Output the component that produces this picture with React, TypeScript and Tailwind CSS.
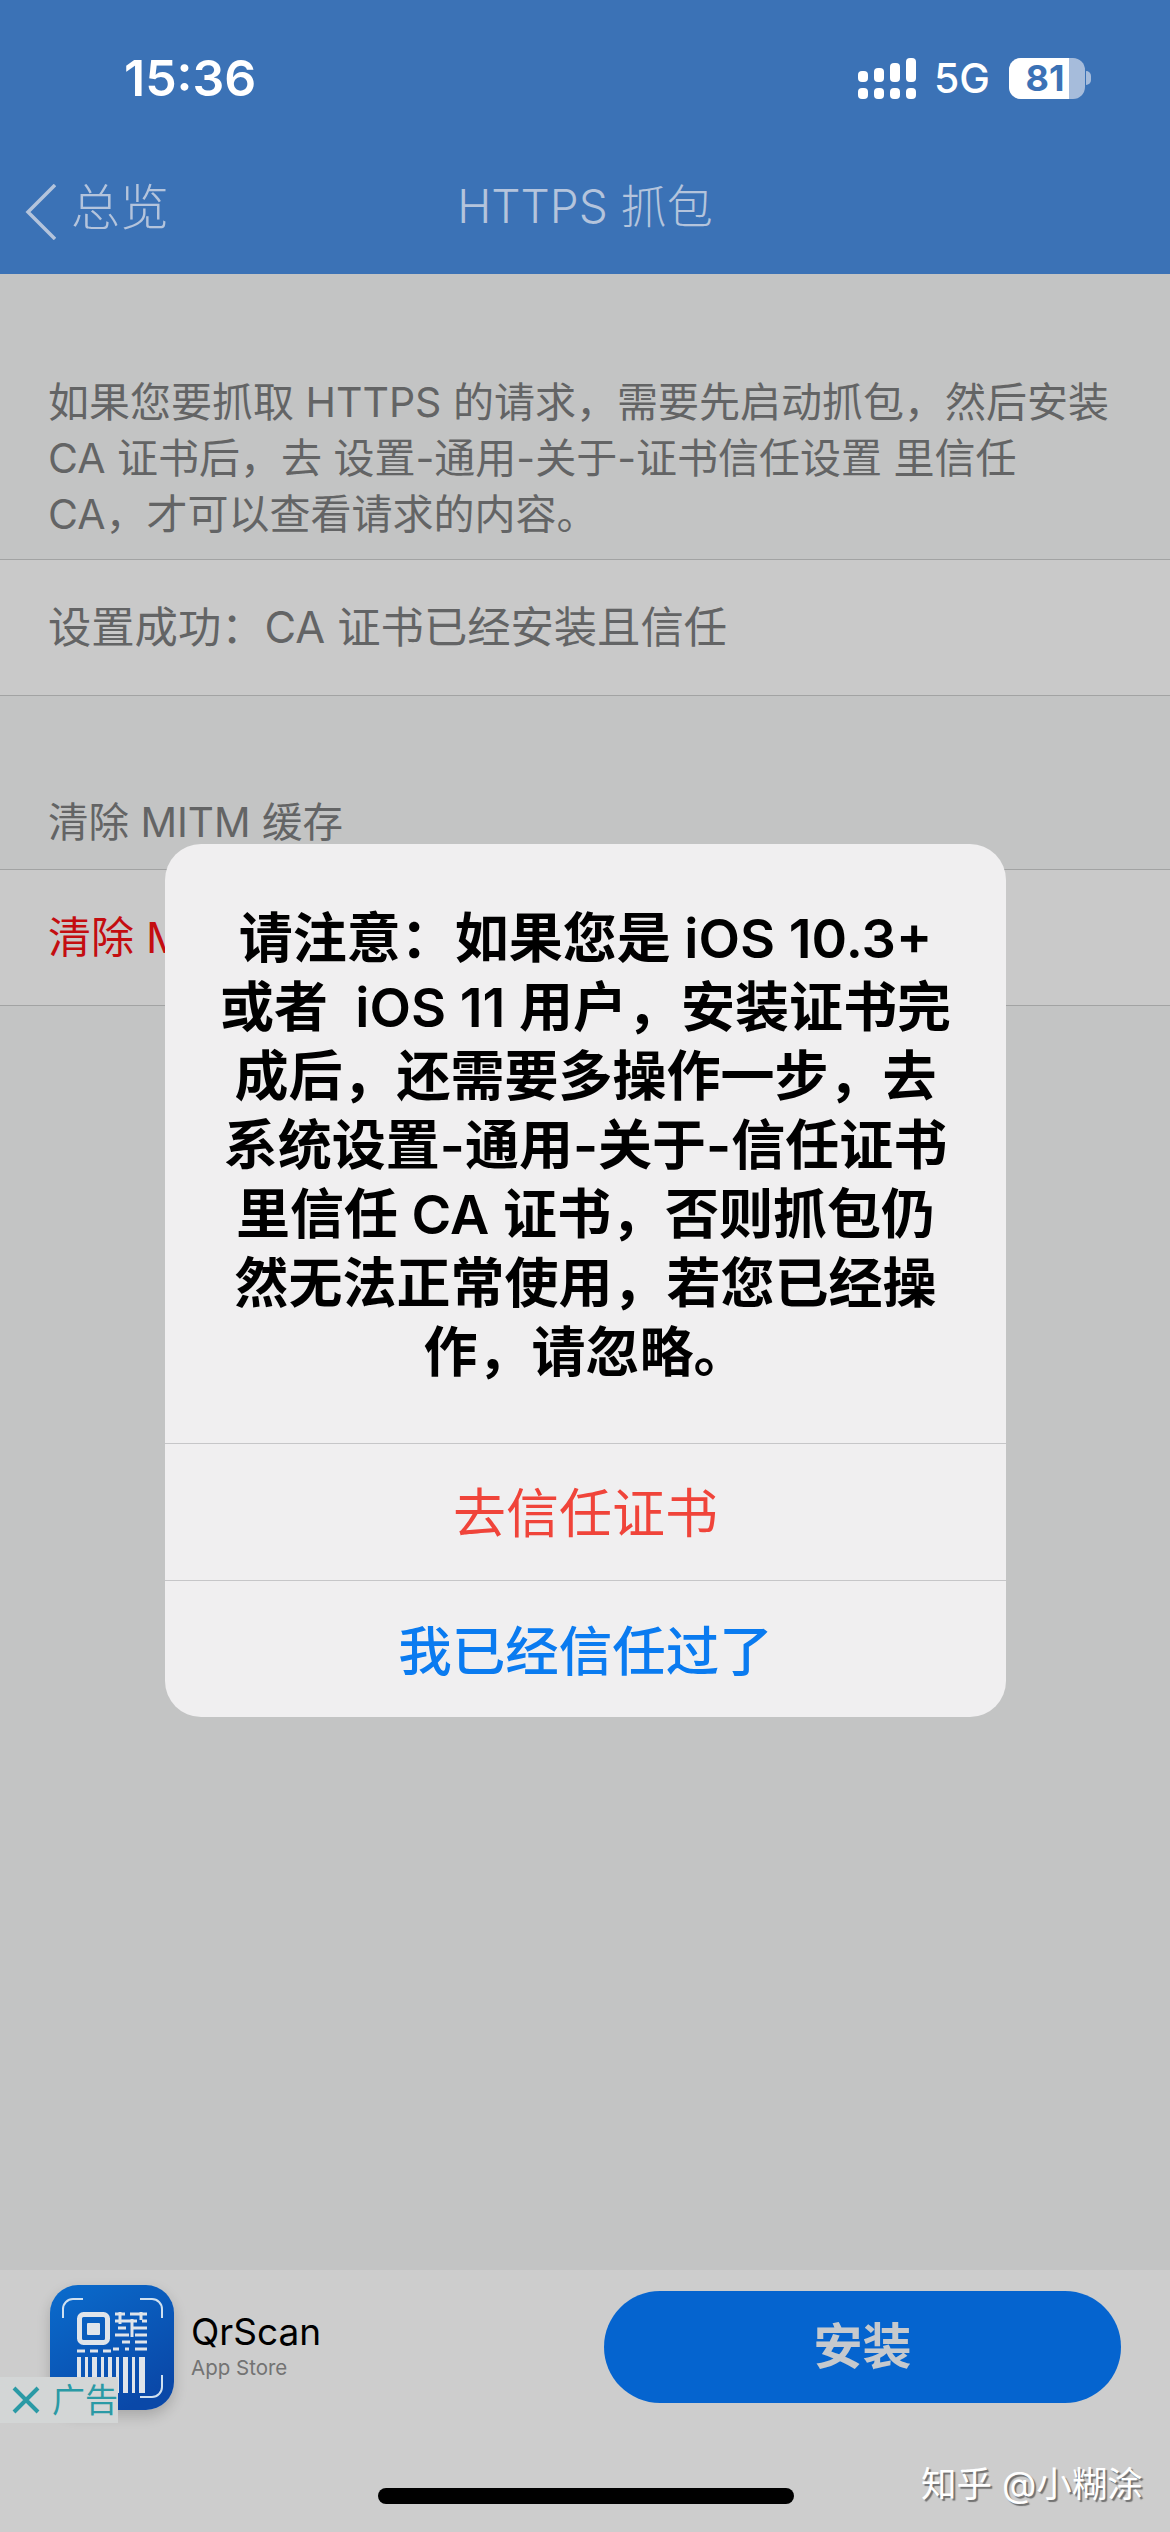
const SANS = "font-['Inter','Noto_Sans_CJK_SC',sans-serif]";

function QrIcon() {
  return (
    <svg width="124" height="125" viewBox="0 0 124 125" className="rounded-[28px]">
      <defs>
        <linearGradient id="g" x1="0" y1="0" x2="0.6" y2="1">
          <stop offset="0" stopColor="#0a6ccd" />
          <stop offset="1" stopColor="#0a48a8" />
        </linearGradient>
      </defs>
      <rect width="124" height="125" fill="url(#g)" />
      <g fill="none" stroke="#cfe0f0" strokeWidth="2">
        <path d="M13 33V24a10 10 0 0 1 10-10h10M90 14h12a10 10 0 0 1 10 10v9M112 90v12a10 10 0 0 1-10 10H90" />
      </g>
      <rect x="29.5" y="29.5" width="28" height="28" rx="4" fill="none" stroke="#dfe4ea" strokeWidth="5" />
      <rect x="37" y="38" width="13" height="12" rx="1" fill="#dfe4ea" />
      <g stroke="#dfe4ea" strokeWidth="3" fill="none">
        <path d="M65 29h10M80 29h17M65 36h22M92 36h5M68 43h8M81 43h16M65 50h14M85 50h12M72 57h8M85 57h12M63 64h6M75 64h4M85 64h12M27 66h8M40 66h8M53 66h8" />
        <path d="M70 27v12M82 34v18M91 27v8" />
      </g>
      <g fill="#dfe4ea">
        <rect x="27" y="72" width="4" height="36" />
        <rect x="35" y="72" width="3" height="36" />
        <rect x="42" y="72" width="5" height="36" />
        <rect x="51" y="72" width="3" height="36" />
        <rect x="58" y="72" width="4" height="36" />
        <rect x="66" y="72" width="3" height="36" />
        <rect x="73" y="72" width="5" height="36" />
        <rect x="82" y="72" width="3" height="36" />
        <rect x="89" y="72" width="6" height="36" />
      </g>
    </svg>
  );
}

function Signal() {
  return (
    <svg width="58" height="41" viewBox="0 0 58 41" fill="#fff">
      <rect x="0" y="13" width="10" height="11" rx="4" />
      <rect x="16" y="10" width="10" height="14" rx="4" />
      <rect x="32" y="5" width="10" height="19" rx="4" />
      <rect x="48" y="0" width="10" height="24" rx="4" />
      <rect x="0" y="30" width="10" height="11" rx="4" />
      <rect x="16" y="30" width="10" height="11" rx="4" />
      <rect x="32" y="30" width="10" height="11" rx="4" />
      <rect x="48" y="30" width="10" height="11" rx="4" />
    </svg>
  );
}

export default function App() {
  return (
    <div className={`relative w-[1170px] h-[2532px] overflow-hidden bg-[#c3c4c4] ${SANS}`}>
      {/* Header */}
      <header className="h-[274px] bg-[#3b72b6] flex flex-col">
        <div className="h-[158px] flex items-start justify-between pl-[124px] pr-[79px] pt-[50px]">
          <span className="text-white text-[50px] leading-[56px] font-semibold">15:36</span>
          <div className="flex items-center gap-[18px] pt-[6px]">
            <Signal />
            <span className="text-white text-[41px] leading-[44px] font-medium">5G</span>
            <div className="flex items-center ml-[1px]">
              <div className="w-[76px] h-[41px] rounded-[12px] bg-[#a6bcdb] overflow-hidden">
                <div className="w-[60px] h-full bg-white flex items-center justify-center pl-[12px]">
                  <span className="text-[#3b72b6] text-[36px] leading-none font-bold">81</span>
                </div>
              </div>
              <div className="w-[5px] h-[14px] rounded-r-full bg-[#a6bcdb] ml-[1px]" />
            </div>
          </div>
        </div>
        <div className="relative flex-1 flex items-start justify-center pt-[18px]">
          <div className="absolute left-[25px] top-[18px] flex items-center gap-[15px]">
            <svg width="31" height="56" viewBox="0 0 31 56" fill="none" stroke="#b4c4dc" strokeWidth="3.5" className="mt-[8px]">
              <path d="M30 1 3 28l27 27" />
            </svg>
            <span className="text-[#b4c4dc] text-[49px] leading-[56px] font-light">总览</span>
          </div>
          <span className="text-[#b4c4dc] text-[46px] leading-[60px] font-light">HTTPS 抓包</span>
        </div>
      </header>

      {/* Content */}
      <main className="flex flex-col">
        <p className="mt-[100px] pl-[48px] pr-[48px] pb-[17px] text-[#636465] text-[41px] leading-[56px]">
          如果您要抓取 HTTPS 的请求，需要先启动抓包，然后安装
          <br />
          CA 证书后，去 设置-通用-关于-证书信任设置 里信任
          <br />
          CA，才可以查看请求的内容。
        </p>
        <div className="h-[137px] border-y border-[#a2a3a3] bg-[#c9c9c9] flex items-center px-[48px] text-[#636465] text-[43.3px]">
          设置成功：CA 证书已经安装且信任
        </div>
        <div className="h-[173px] flex items-end px-[48px] pb-[15px] text-[#636465] text-[40.5px]">
          清除 MITM 缓存
        </div>
        <div className="h-[137px] border-y border-[#a2a3a3] bg-[#c9c9c9] flex items-center px-[48px] text-[#c40d10] text-[43px]">
          清除 MITM 缓存
        </div>
      </main>

      {/* Dialog */}
      <div className="absolute left-[165px] top-[844px] w-[841px] h-[873px] rounded-[36px] bg-[#f0eff0] flex flex-col">
        <div className="h-[599px] px-[52px] pt-[60px] text-center text-black text-[54px] leading-[69px] font-semibold">
          请注意：如果您是 iOS 10.3+ 或者&nbsp; iOS 11 用户，安装证书完成后，还需要多操作一步，去系统设置-通用-关于-信任证书里信任 CA 证书，否则抓包仍然无法正常使用，若您已经操作，请忽略。
        </div>
        <button className="h-[137px] border-t border-[#c6c6c8] text-[#f0443a] text-[53px] pt-[6px]">去信任证书</button>
        <button className="flex-1 border-t border-[#c6c6c8] text-[#0a7bf0] text-[53.5px] font-medium pt-[6px]">我已经信任过了</button>
      </div>

      {/* Ad */}
      <div className="absolute left-0 top-[2270px] w-[1170px] h-[262px] bg-[#cdcdcd]">
        <div className="absolute left-[50px] top-[15px] w-[124px] h-[125px] rounded-[28px] shadow-[0_6px_14px_rgba(0,0,0,0.18)]">
          <QrIcon />
        </div>
        <div className="absolute left-0 top-[107px] w-[118px] h-[46px] bg-[#d3d6d6] flex items-center pl-[12px] gap-[12px] overflow-hidden">
          <svg width="28" height="28" viewBox="0 0 28 28" stroke="#2a9aa5" strokeWidth="4" fill="none" className="shrink-0">
            <path d="M2 2l24 24M26 2 2 26" />
          </svg>
          <span className="text-[#2a9aa5] text-[33px] leading-none whitespace-nowrap">广告</span>
        </div>
        <div className="absolute left-[191px] top-[40px] flex flex-col">
          <span className="text-black text-[37px] leading-[44px]">QrScan</span>
          <span className="text-[#737373] text-[20.5px] leading-[28px]">App Store</span>
        </div>
        <button className="absolute left-[604px] top-[21px] w-[517px] h-[112px] rounded-[56px] bg-[#0564cf] text-[#c6c9cd] text-[49px] font-semibold">安装</button>
        <div className="absolute left-[378px] top-[218px] w-[416px] h-[16px] rounded-full bg-black" />
        <div className="absolute left-[921px] top-[193px] text-white text-[35.5px] leading-[44px] [text-shadow:2px_2px_1px_rgba(0,0,0,0.45)] whitespace-nowrap">知乎 @小糊涂</div>
      </div>
    </div>
  );
}
